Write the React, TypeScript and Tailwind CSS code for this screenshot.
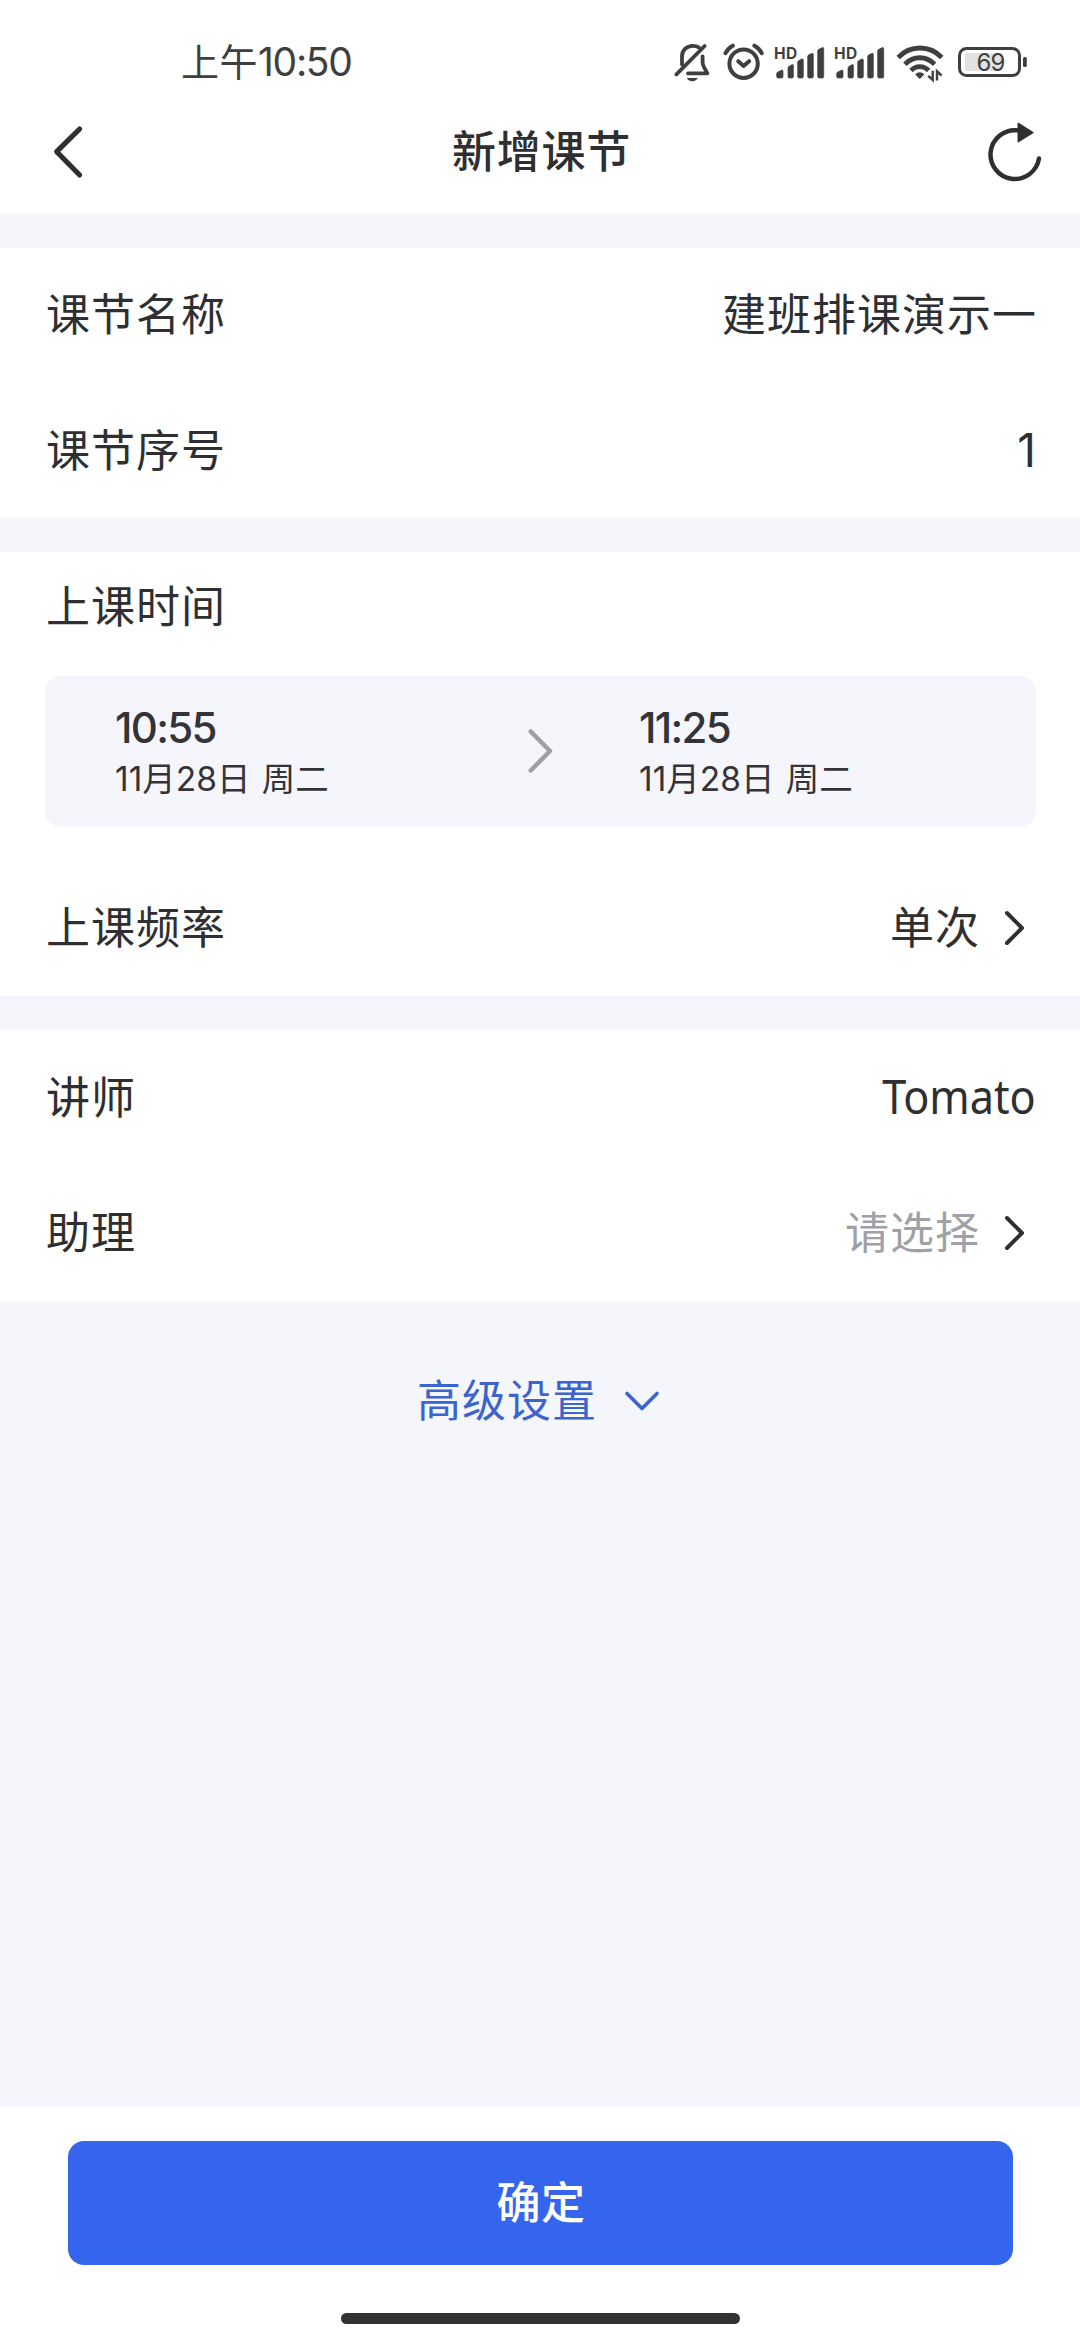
import React from 'react';

interface ChevronProps {
  className?: string;
}

function ChevronRight({ className = '' }: ChevronProps) {
  return (
    <svg
      width="24"
      height="38"
      viewBox="0 0 24 38"
      fill="none"
      stroke="currentColor"
      strokeWidth="4"
      strokeLinecap="round"
      strokeLinejoin="round"
      className={className}
    >
      <path d="M4 4 19 19 4 34" />
    </svg>
  );
}

function BellOffIcon() {
  return (
    <svg width="38" height="42" viewBox="0 0 38 42" fill="none" stroke="currentColor" strokeWidth="3.8" strokeLinecap="round" strokeLinejoin="round">
      <path d="M8 22.5V14.5C8 8.5 12.4 3.8 18.7 3.8c2.4 0 4.4.5 6.2 1.6" />
      <path d="M28.6 14.5v5.8c0 1.6.6 3.2 1.4 4.8l3.4 6.3H14" />
      <path d="M2.4 32.4 30.6 4" />
      <path d="M12.8 36h11c-.8 2-2.9 3.2-5.5 3.2S13.6 38 12.8 36Z" fill="currentColor" stroke="none" />
    </svg>
  );
}

function AlarmIcon() {
  return (
    <svg width="44" height="42" viewBox="0 0 44 42" fill="none" stroke="currentColor" strokeWidth="4" strokeLinecap="round" strokeLinejoin="round">
      <circle cx="21.6" cy="21.7" r="14.2" />
      <path d="m16.2 19.2 5.4 4.7 5.6-4.7" />
      <path d="M3.5 11.2C5 8 7.5 5.4 10.8 3.7M39.7 11.2c-1.5-3.2-4-5.8-7.3-7.5" />
    </svg>
  );
}

function SignalIcon() {
  return (
    <div className="relative h-[42px] w-[60px]">
      <span className="absolute left-[2px] top-[4px] text-[15.5px] font-bold leading-[16px] tracking-[0.5px]">HD</span>
      <svg width="60" height="42" viewBox="0 0 60 42" fill="currentColor" stroke="currentColor" strokeWidth="0.7">
        <path d="M4.7 31.5q0-.8.7-1.2l4-2.1q1.6-.6 1.6 1V34.5Q11 36 9.5 36H6.2q-1.5 0-1.5-1.5Z" />
        <path d="M16 26q0-.9.8-1.4l3-1.8q1.6-.7 1.6 1v10.7q0 1.5-1.5 1.5H17.5Q16 36 16 34.5Z" />
        <path d="M25.7 20.2q0-.9.8-1.4l3.2-1.7q1.6-.7 1.6 1v16.4q0 1.5-1.5 1.5h-2.6q-1.5 0-1.5-1.5Z" />
        <path d="M35.7 14.5q0-.9.8-1.4l3.2-1.7q1.6-.7 1.6 1v22.1q0 1.5-1.5 1.5h-2.6q-1.5 0-1.5-1.5Z" />
        <path d="M45.7 8.9q0-.9.8-1.4l3.5-1.8q1.7-.6 1.7 1v27.8q0 1.5-1.5 1.5h-3q-1.5 0-1.5-1.5Z" />
      </svg>
    </div>
  );
}

function WifiIcon() {
  return (
    <svg width="50" height="42" viewBox="0 0 50 42" fill="none" stroke="currentColor" strokeWidth="4.8">
      <path d="M2.2 15.5C14 2.8 34 2.8 45.7 15.5" />
      <path d="M8.9 22.2c8.5-8.6 21.2-8.6 29.7 0" />
      <path d="M15 28.5c4.8-5.2 12.8-5.2 17.6 0" />
      <path d="M19.2 32.2c2.5-2.7 6.5-2.7 9.1 0l-3.5 3.9q-1.1 1.1-2.2 0Z" fill="currentColor" stroke="none" />
      <path d="M36.7 28.8v9.2l-4.4-4.2M41 38.4V29.3l4.5 4.2" strokeWidth="2.4" />
    </svg>
  );
}

function BatteryIcon() {
  return (
    <div className="relative h-[30px] w-[69px]">
      <svg width="69" height="30" viewBox="0 0 69 30" fill="none">
        <rect x="7" y="6" width="37" height="18" rx="2" fill="#e2e2e2" />
        <rect x="1.5" y="1.5" width="60" height="27" rx="7" stroke="currentColor" strokeWidth="3" />
        <rect x="65" y="10" width="3.8" height="10" rx="1.5" fill="currentColor" />
      </svg>
      <span className="absolute left-0 top-0 w-[65px] text-center text-[24px] leading-[31px] tracking-[-1px]">69</span>
    </div>
  );
}

function StatusBar() {
  return (
    <div className="flex h-[104px] justify-between pl-[181px] pr-[53px] text-[#3f3f3f]">
      <div className="flex h-[84px] items-center pt-[42px] pb-[2px] text-[38px]">
        <span className="tracking-[0.5px]">上午</span>
        <span className="text-[39px] tracking-[-1.3px]">10:50</span>
      </div>
      <div className="flex pt-[42px]">
        <BellOffIcon />
        <div className="ml-[10px]"><AlarmIcon /></div>
        <div className="ml-[6px]"><SignalIcon /></div>
        <SignalIcon />
        <div className="ml-[4px]"><WifiIcon /></div>
        <div className="ml-[12px] pt-[5px]"><BatteryIcon /></div>
      </div>
    </div>
  );
}

function Header() {
  return (
    <header className="flex h-[110px] items-start justify-between pl-[51px] pr-[36px]">
      <svg width="56" height="96" viewBox="0 0 56 96" fill="none" stroke="currentColor" strokeWidth="5.2" strokeLinecap="round" strokeLinejoin="round">
        <path d="M28.6 25 5.7 47.7 28.6 71" />
      </svg>
      <h1 className="mr-[12px] h-[96px] text-[44px] font-medium leading-[96px] tracking-[0.8px]">新增课节</h1>
      <svg width="56" height="96" viewBox="0 0 56 96" fill="none">
        <path d="M29.5 26.3A24.4 24.4 0 1 0 51 54.5" stroke="currentColor" strokeWidth="4.5" strokeLinecap="round" />
        <path d="M30.3 19.5v18.2L44.8 28.6Z" fill="currentColor" stroke="currentColor" strokeWidth="1.5" strokeLinejoin="round" />
      </svg>
    </header>
  );
}

interface RowProps {
  label: string;
  children: React.ReactNode;
}

function Row({ label, children }: RowProps) {
  return (
    <div className="flex h-[135px] items-center justify-between">
      <span>{label}</span>
      <div className="flex items-center">{children}</div>
    </div>
  );
}

interface TimeBlockProps {
  time: string;
  className?: string;
}

function TimeBlock({ time, className = '' }: TimeBlockProps) {
  return (
    <div className={className}>
      <div className="h-[52px] text-[42px] font-medium leading-[52px] tracking-[-1.7px]">{time}</div>
      <div className="h-[50px] text-[33.5px] leading-[51px] tracking-[0px] [word-spacing:2px]">11月28日 周二</div>
    </div>
  );
}

export default function App() {
  return (
    <div className="flex h-[2340px] w-[1080px] flex-col bg-[#f5f6fb] font-['Inter','Noto_Sans_CJK_SC',sans-serif] text-[44px] tracking-[1px] text-[#2f2f31]">
      <div className="h-[214px] bg-white">
        <StatusBar />
        <Header />
      </div>

      <section className="mt-[34px] flex h-[270px] flex-col gap-px bg-white pl-[46px] pr-[43px]">
        <div className="-mt-px">
          <Row label="课节名称">建班排课演示一</Row>
        </div>
        <Row label="课节序号">
          <span className="text-[46px]">1</span>
        </Row>
      </section>

      <section className="mt-[34px] h-[444px] bg-white pl-[46px] pr-[44px]">
        <div className="h-[124px] leading-[111px]">上课时间</div>
        <div className="ml-[-1px] flex h-[151px] items-start rounded-[16px] bg-[#f5f6fb] pl-[70px] text-[#333338]">
          <TimeBlock time="10:55" className="w-[411px] pt-[26px]" />
          <div className="flex h-[150px] w-[113px] items-center text-[#9fa0a5]">
            <svg width="28" height="48" viewBox="0 0 28 48" fill="none" stroke="currentColor" strokeWidth="4.5" strokeLinecap="round" strokeLinejoin="round">
              <path d="m4.7 4.5 19.3 19.5L4.7 43.5" />
            </svg>
          </div>
          <TimeBlock time="11:25" className="pt-[26px]" />
        </div>
        <div className="pt-[33px]">
          <Row label="上课频率">
            单次
            <ChevronRight className="ml-[23px] mr-[9px]" />
          </Row>
        </div>
      </section>

      <section className="mt-[34px] h-[271px] bg-white pl-[46px] pr-[44px]">
        <Row label="讲师">
          <span className="mb-[3px] origin-right scale-x-[0.91] font-['Noto_Sans'] text-[47.5px] leading-[60px] tracking-normal">Tomato</span>
        </Row>
        <Row label="助理">
          <span className="text-[#9fa1a6]">请选择</span>
          <ChevronRight className="ml-[23px] mr-[9px]" />
        </Row>
      </section>

      <div className="flex flex-1 items-start pl-[417px] pt-[67px] leading-[66px] text-[#3c64cf]">
        高级设置
        <svg width="38" height="66" viewBox="0 0 38 66" fill="none" stroke="currentColor" strokeWidth="3.6" strokeLinecap="round" strokeLinejoin="round" className="ml-[26px]">
          <path d="m4 25.5 15 15 15-15" />
        </svg>
      </div>

      <footer className="flex h-[233px] flex-col items-center bg-white pt-[34px]">
        <button className="h-[124px] w-[945px] rounded-[16px] bg-[#3565ec] pl-[2px] font-medium tracking-[0.5px] text-white">确定</button>
        <div className="mt-[48px] h-[11px] w-[399px] rounded-full bg-[#323232]" />
      </footer>
    </div>
  );
}
